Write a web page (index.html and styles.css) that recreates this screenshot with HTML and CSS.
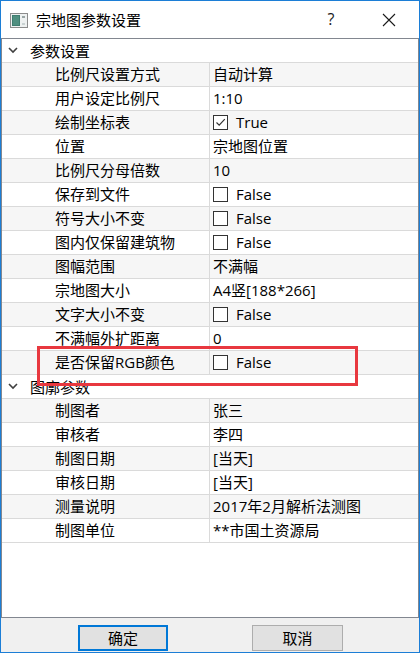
FILE: index.html
```html
<!DOCTYPE html>
<html lang="zh-CN">
<head>
<meta charset="utf-8">
<title>宗地图参数设置</title>
<link rel="stylesheet" href="styles.css">
</head>
<body>
<div class="window">
  <div class="titlebar">
    <svg class="app-icon" width="18" height="15" viewBox="0 0 18 15">
      <rect x="0.5" y="0.5" width="17" height="14" fill="#eef1f1" stroke="#8c8c8c"/>
      <rect x="2" y="2" width="8" height="11" fill="#3f7d70"/>
      <rect x="3" y="3" width="6" height="9" fill="#4f8f80"/>
      <rect x="12" y="3" width="3" height="2" fill="#9aa5a5"/>
      <rect x="12" y="10" width="3" height="2" fill="#c9d2d2"/>
    </svg>
    <span class="title">宗地图参数设置</span>
    <span class="help">?</span>
    <svg class="close" width="14" height="14" viewBox="0 0 14 14">
      <path d="M1 1 L13 13 M13 1 L1 13" stroke="#1a1a1a" stroke-width="1.1" fill="none"/>
    </svg>
  </div>

  <div class="grid">
    <div class="group">
      <svg class="chev" width="10" height="7" viewBox="0 0 10 7"><path d="M1 1 L5 5 L9 1" stroke="#404040" stroke-width="1.6" fill="none"/></svg>
      <span>参数设置</span>
    </div>
    <div class="row alt"><div class="lbl">比例尺设置方式</div><div class="val">自动计算</div></div>
    <div class="row"><div class="lbl">用户设定比例尺</div><div class="val">1:10</div></div>
    <div class="row alt"><div class="lbl">绘制坐标表</div><div class="val"><span class="cb"><svg width="13" height="13" viewBox="0 0 13 13"><path d="M2.5 6.5 L5.2 9.2 L10.8 3.2" stroke="#333" stroke-width="1.2" fill="none"/></svg></span>True</div></div>
    <div class="row"><div class="lbl">位置</div><div class="val">宗地图位置</div></div>
    <div class="row alt"><div class="lbl">比例尺分母倍数</div><div class="val">10</div></div>
    <div class="row"><div class="lbl">保存到文件</div><div class="val"><span class="cb"></span>False</div></div>
    <div class="row alt"><div class="lbl">符号大小不变</div><div class="val"><span class="cb"></span>False</div></div>
    <div class="row"><div class="lbl">图内仅保留建筑物</div><div class="val"><span class="cb"></span>False</div></div>
    <div class="row alt"><div class="lbl">图幅范围</div><div class="val">不满幅</div></div>
    <div class="row"><div class="lbl">宗地图大小</div><div class="val">A4竖[188*266]</div></div>
    <div class="row alt"><div class="lbl">文字大小不变</div><div class="val"><span class="cb"></span>False</div></div>
    <div class="row"><div class="lbl">不满幅外扩距离</div><div class="val">0</div></div>
    <div class="row alt"><div class="lbl">是否保留RGB颜色</div><div class="val"><span class="cb"></span>False</div></div>

    <div class="group">
      <svg class="chev" width="10" height="7" viewBox="0 0 10 7"><path d="M1 1 L5 5 L9 1" stroke="#404040" stroke-width="1.6" fill="none"/></svg>
      <span>图廓参数</span>
    </div>
    <div class="row alt"><div class="lbl">制图者</div><div class="val">张三</div></div>
    <div class="row"><div class="lbl">审核者</div><div class="val">李四</div></div>
    <div class="row alt"><div class="lbl">制图日期</div><div class="val">[当天]</div></div>
    <div class="row"><div class="lbl">审核日期</div><div class="val">[当天]</div></div>
    <div class="row alt"><div class="lbl">测量说明</div><div class="val">2017年2月解析法测图</div></div>
    <div class="row"><div class="lbl">制图单位</div><div class="val">**市国土资源局</div></div>
  </div>

  <div class="footer">
    <button class="btn btn-ok">确定</button>
    <button class="btn btn-cancel">取消</button>
  </div>

  <div class="highlight"></div>
</div>
</body>
</html>
```

FILE: styles.css
```css
html, body {
  margin: 0;
  padding: 0;
  background: #ffffff;
}

body {
  font-family: "Open Sans", "Noto Sans CJK SC", sans-serif;
  font-size: 15px;
  color: #000;
}

.window {
  position: relative;
  width: 420px;
  height: 653px;
  box-sizing: border-box;
  border: 1px solid #1c7ed6;
  display: flex;
  flex-direction: column;
  background: #ffffff;
}

.titlebar {
  height: 37px;
  flex: none;
  display: flex;
  align-items: center;
  background: #ffffff;
}

.app-icon {
  margin-left: 9px;
  margin-top: 1px;
  flex: none;
}

.title {
  margin-left: 8px;
  line-height: 37px;
  font-family: "Noto Sans CJK SC", sans-serif;
  font-size: 15px;
}

.help {
  margin-left: auto;
  margin-right: 0;
  font-family: "Open Sans", sans-serif;
  font-size: 16px;
  width: 14px;
  text-align: center;
  margin-top: -2px;
  color: #1a1a1a;
}

.close {
  margin-left: 44px;
  margin-right: 23px;
  margin-top: 1px;
  flex: none;
}

.grid {
  height: 580px;
  flex: none;
  box-sizing: border-box;
  border: 1px solid #828790;
  background: #ffffff;
  overflow: hidden;
}

.group {
  height: 24px;
  box-sizing: border-box;
  border-bottom: 1px solid #dadada;
  display: flex;
  align-items: center;
  background: #ffffff;
  font-family: "Noto Sans CJK SC", sans-serif;
}

.group .chev {
  margin-left: 6px;
  margin-top: -1px;
  flex: none;
}

.group span {
  margin-left: 12px;
  line-height: 23px;
}

.row {
  height: 24px;
  box-sizing: border-box;
  border-bottom: 1px solid #dadada;
  display: flex;
  background: #ffffff;
}

.row.alt {
  background: #f6f6f6;
}

.lbl {
  width: 208px;
  flex: none;
  box-sizing: border-box;
  border-right: 1px solid #dadada;
  padding-left: 53px;
  line-height: 23px;
  white-space: nowrap;
}

.val {
  flex: 1;
  padding-left: 3px;
  line-height: 23px;
  white-space: nowrap;
  display: flex;
  align-items: center;
}

.cb {
  width: 15px;
  height: 15px;
  box-sizing: border-box;
  border: 1px solid #333333;
  background: #ffffff;
  margin-right: 8px;
  flex: none;
  display: flex;
  align-items: center;
  justify-content: center;
}

.cb svg {
  display: block;
}

.footer {
  flex: 1;
  background: #f0f0f0;
  display: flex;
  align-items: flex-start;
  padding-top: 7px;
  padding-left: 77px;
}

.btn {
  height: 26px;
  box-sizing: border-box;
  background: #e1e1e1;
  font-family: "Noto Sans CJK SC", sans-serif;
  font-size: 15px;
  color: #000;
  padding: 0;
  margin: 0;
  line-height: 22px;
}

.btn-ok {
  width: 90px;
  border: 2px solid #0078d7;
}

.btn-cancel {
  width: 91px;
  margin-left: 84px;
  border: 1px solid #adadad;
}

.highlight {
  position: absolute;
  left: 36px;
  top: 345px;
  width: 321px;
  height: 40px;
  box-sizing: border-box;
  border: 3px solid #e8383f;
  pointer-events: none;
}
```
